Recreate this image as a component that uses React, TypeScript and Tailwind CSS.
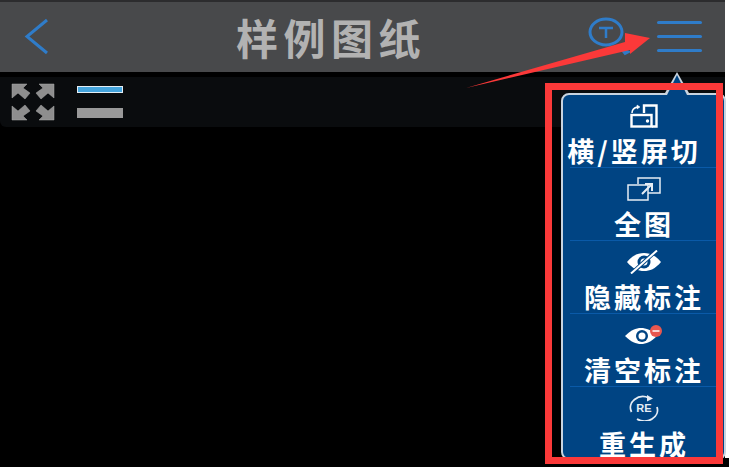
const cjk = "font-['Noto_Sans_CJK_SC','Noto_Sans_CJK_JP',sans-serif]";

function RotateIcon() {
  return (
    <svg width="28" height="24" viewBox="0 0 28 24" fill="none" stroke="white" strokeWidth="2.400">
      <rect x="1.500" y="11" width="20" height="11.500" />
      <path d="M14 9V1.500h12.500v21H22" />
      <circle cx="17.500" cy="17" r="1.700" fill="white" stroke="none" />
      <path d="M2 9c0-3 2-5 5-6" strokeWidth="1.500" />
      <path d="M7 1l3 2-3 2z" fill="white" strokeWidth="0.500" />
    </svg>
  );
}

function FullIcon() {
  return (
    <svg width="34" height="24" viewBox="0 0 34 24" fill="none" stroke="#e6edf5" strokeWidth="1.500">
      <path d="M11 7V1h22v15H21" />
      <rect x="1" y="8" width="20" height="15" />
      <path d="M15 17l10-10M18 7h7v7" strokeWidth="2" />
    </svg>
  );
}

function HideIcon() {
  return (
    <svg width="36" height="24" viewBox="0 0 36 24">
      <path d="M1 12C7 5 12 3 18 3s11 2 17 9c-6 7-11 9-17 9S7 19 1 12z" fill="white" />
      <circle cx="18" cy="12" r="6.500" fill="#004483" />
      <circle cx="18" cy="12" r="3.500" fill="white" />
      <path d="M5 24L31 0" stroke="#004483" strokeWidth="4" />
      <path d="M5 23.500L31 0.500" stroke="white" strokeWidth="2" />
    </svg>
  );
}

function ClearIcon() {
  return (
    <svg width="38" height="20" viewBox="0 0 38 20">
      <path d="M0 11C6 5 11 3 16 3s11 2 16 8c-6 6-11 8-16 8S6 17 0 11z" fill="white" />
      <circle cx="17" cy="11" r="6" fill="#004483" />
      <circle cx="17" cy="11" r="3.500" fill="white" />
      <circle cx="31" cy="6" r="6" fill="#e8574f" />
      <path d="M27.500 6h7" stroke="white" strokeWidth="1.500" />
    </svg>
  );
}

function RegenIcon() {
  return (
    <svg width="30" height="26" viewBox="0 0 30 26" fill="none" stroke="#e6edf5" strokeWidth="1.800">
      <path d="M2.500 17A12.500 11 0 0 1 20 3" />
      <path d="M18 0l6 3.500-6 3z" fill="#e6edf5" stroke="none" />
      <path d="M8 24A13 11 0 0 0 28 12" />
      <text x="15" y="17" textAnchor="middle" fontSize="11" fontWeight="700" fill="#e6edf5" stroke="none" fontFamily="Liberation Sans">RE</text>
    </svg>
  );
}

const menuItems = [
  { label: '横/竖屏切', icon: <RotateIcon />, cls: 'pr-[20px]' },
  { label: '全图', icon: <FullIcon />, cls: '' },
  { label: '隐藏标注', icon: <HideIcon />, cls: '' },
  { label: '清空标注', icon: <ClearIcon />, cls: '' },
  { label: '重生成', icon: <RegenIcon />, cls: '' },
];

export default function App() {
  return (
    <div className={`relative w-[729px] h-[467px] bg-black overflow-hidden ${cjk}`}>
      {/* Header */}
      <div className="relative h-[72px] bg-[#48494b] border-t-2 border-[#2c2c2e] flex items-center pl-[236px]">
        <svg className="absolute left-[24px] top-[16px]" width="26" height="38" viewBox="0 0 26 38" fill="none" stroke="#2f7cc9" strokeWidth="3">
          <path d="M23 2L3 18.500 23 35" />
        </svg>
        <span className="text-[42px] leading-none font-bold tracking-[5.500px] text-[#b2b2b2]">样例图纸</span>
        <svg className="absolute left-[587px] top-[14px]" width="46" height="40" viewBox="0 0 46 40" fill="none" stroke="#2f7cc9">
          <ellipse cx="19" cy="16" rx="16" ry="13" strokeWidth="3" />
          <path d="M12 12h14M19 12v10" strokeWidth="2.500" />
          <path d="M34 33l8 3-4 2z" fill="#2f7cc9" strokeWidth="2" />
        </svg>
        <div className="absolute left-[657px] top-[19px] w-[45px] flex flex-col gap-[11px]">
          <div className="h-[3px] rounded-full bg-[#2f7cc9]" />
          <div className="h-[3px] rounded-full bg-[#2f7cc9]" />
          <div className="h-[3px] rounded-full bg-[#2f7cc9]" />
        </div>
      </div>

      {/* Toolbar */}
      <div className="mt-[5px] h-[50px] bg-[#0a0c0e] flex items-center pl-[11px] gap-[22px] rounded-bl-md">
        <svg width="44" height="38" viewBox="0 0 44 38" fill="#8e8e8e" stroke="#a8a8a8" strokeWidth="0.500">
          <path d="M1 1h15l-4 4 7 5-5 6-7-6-6 5zM43 1H28l4 4-7 5 5 6 7-6 6 5zM1 37h15l-4-4 7-5-5-6-7 6-6-5zM43 37H28l4-4-7-5 5-6 7 6 6-5z" />
        </svg>
        <div className="flex flex-col gap-[15px]">
          <div className="w-[46px] h-[7px] bg-[#45a5dd] border border-[#e3eef5]" />
          <div className="w-[46px] h-[10px] bg-[#999999]" />
        </div>
      </div>

      {/* White screenshot margin */}
      <div className="absolute right-0 top-0 w-[4px] h-[458px] bg-white" />

      {/* Dropdown menu */}
      <div className="absolute left-[561px] top-[93px] w-[165px] h-[367px] bg-[#004483] border-2 border-[#c9d4e0] rounded-lg flex flex-col pl-[7px] pr-[6px] text-white">
        {menuItems.map((item, i) => (
          <div
            key={item.label}
            className={`h-[73px] shrink-0 flex flex-col items-center justify-between pt-[7px] pb-[1px] ${i < 4 ? 'border-b border-[#0a5aa8]' : ''}`}
          >
            <div className="h-[28px] flex items-center justify-center">{item.icon}</div>
            <div className={`text-[27px] leading-[30px] tracking-[3px] font-semibold whitespace-nowrap ${item.cls}`}>{item.label}</div>
          </div>
        ))}
      </div>
      <div className="absolute left-[665px] top-[72px] w-0 h-0 border-x-[12px] border-x-transparent border-b-[21px] border-b-[#c9d4e0]" />
      <div className="absolute left-[667px] top-[75px] w-0 h-0 border-x-[10px] border-x-transparent border-b-[20px] border-b-[#004483]" />

      {/* Annotation box and arrow */}
      <div className="absolute left-[545px] top-[83px] w-[178px] h-[381px] border-[7px] border-[#fb3939]" />
      <svg className="absolute left-[460px] top-[25px]" width="200" height="70" viewBox="0 0 200 70">
        <path d="M6 63L165 17 165 8 190 13 170 29 170 25z" fill="#fb3939" />
      </svg>
    </div>
  );
}
